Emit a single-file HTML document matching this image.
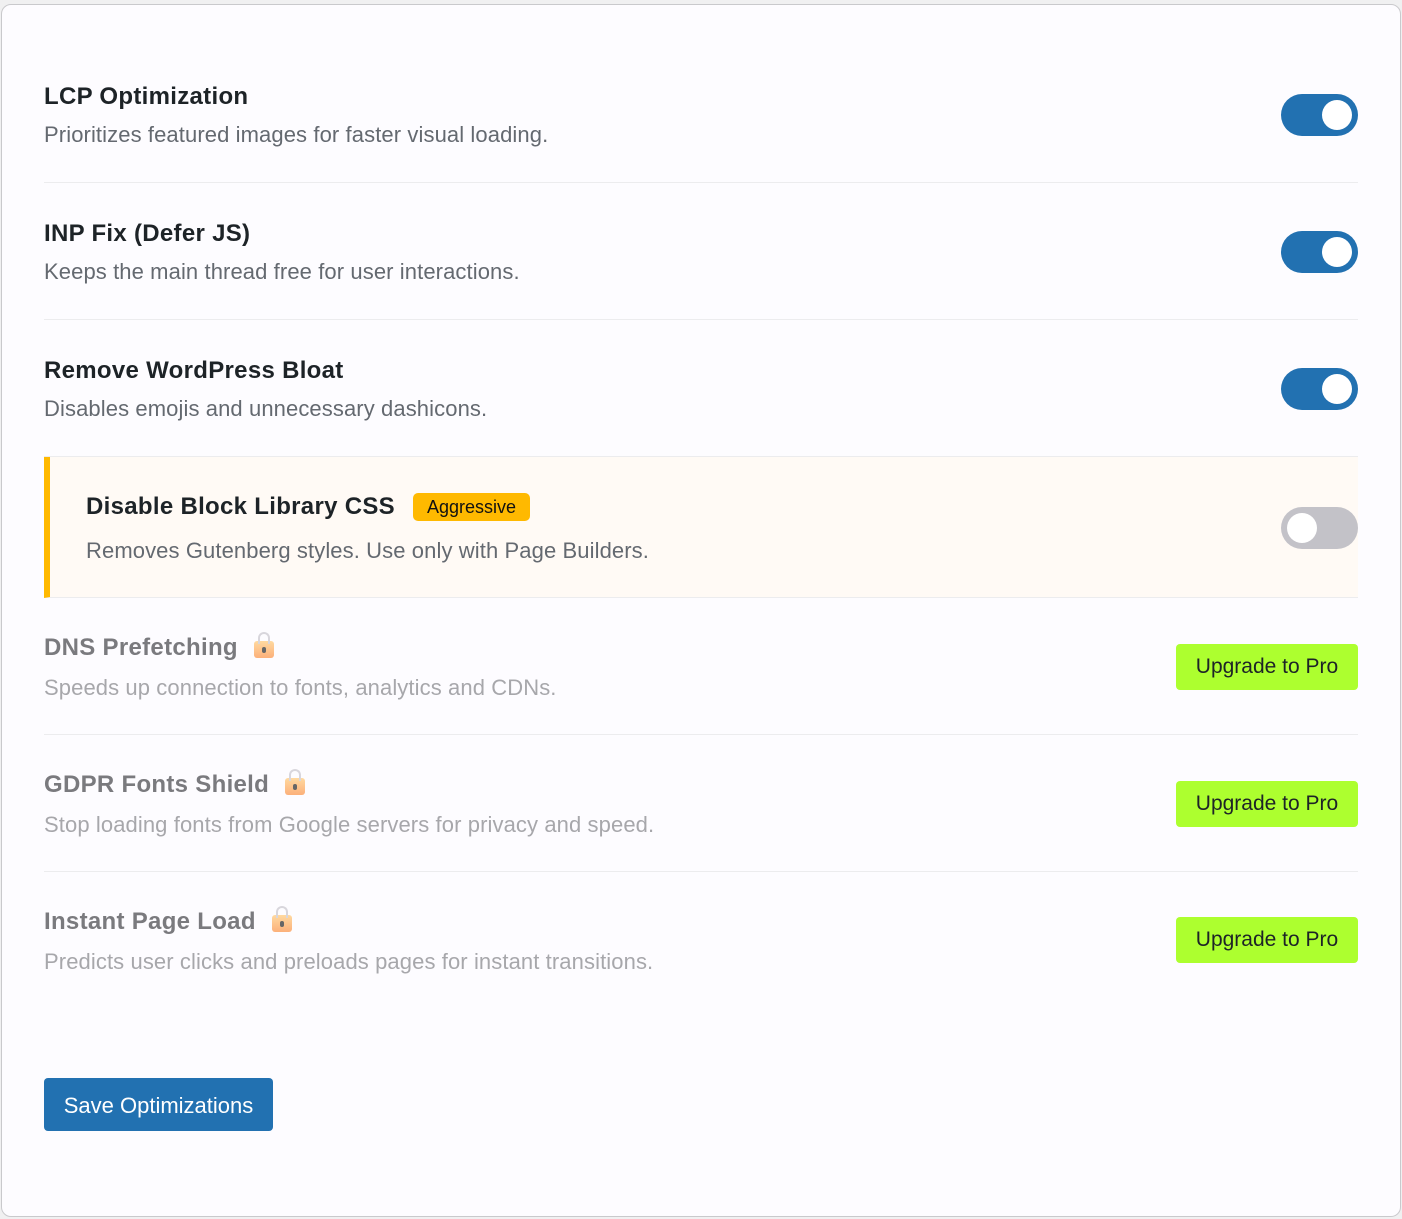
<!DOCTYPE html>
<html><head><style>
*{box-sizing:border-box;margin:0;padding:0}
body{width:1402px;height:1219px;background:#f0f0f1;font-family:"Liberation Sans",sans-serif;position:relative;overflow:hidden}
.card{position:absolute;left:1px;top:4px;width:1400px;height:1213px;background:#fdfcff;border:1px solid #c9c9cc;border-radius:10px}
.row{position:absolute;left:44px;width:1314px;height:137px;border-bottom:1px solid #ececee}
.t{position:absolute;left:0;font-size:24px;font-weight:600;color:#1d2327;letter-spacing:0.3px}
.d{position:absolute;left:0;font-size:22px;color:#646970;letter-spacing:0.1px}
.tg{position:absolute;right:0;width:77px;height:42px;border-radius:21px;background:#2271b1}
.tg::after{content:"";position:absolute;right:6px;top:6px;width:30px;height:30px;border-radius:50%;background:#fff}
.tg.off{background:#c3c2c8}
.tg.off::after{left:6px;right:auto}
.pro .t{color:#7a7a7e}.pro .d{color:#a7a7ab}
.up{position:absolute;right:0;width:182px;height:46px;background:#adff2f;border-radius:4px;font-size:21px;color:#1d2327;text-align:center;line-height:46px}
.lock{display:inline-block;width:20px;height:17px;background:linear-gradient(#ffd9a0,#fcb07a);border-radius:3px;position:relative;margin-left:16px;vertical-align:-3px}
.lock::before{content:"";position:absolute;left:4px;top:-9px;width:8px;height:10px;border:2px solid #d8d6dc;border-bottom:none;border-radius:6px 6px 0 0}
.lock::after{content:"";position:absolute;left:8px;top:6px;width:4px;height:6px;background:#666;border-radius:2px}
.badge{display:inline-block;background:#ffb900;border-radius:5px;font-size:18px;font-weight:400;padding:4px 14px 3px;margin-left:18px;vertical-align:1px;color:#111;letter-spacing:0}
</style></head><body>
<div class="card"></div>
<div class="row" style="top:46px"><div class="t" style="top:37px">LCP Optimization</div><div class="d" style="top:76px">Prioritizes featured images for faster visual loading.</div><div class="tg" style="top:48px"></div></div>
<div class="row" style="top:183px"><div class="t" style="top:37px">INP Fix (Defer JS)</div><div class="d" style="top:76px">Keeps the main thread free for user interactions.</div><div class="tg" style="top:48px"></div></div>
<div class="row" style="top:320px"><div class="t" style="top:37px">Remove WordPress Bloat</div><div class="d" style="top:76px">Disables emojis and unnecessary dashicons.</div><div class="tg" style="top:48px"></div></div>
<div class="row" style="top:457px;height:141px;background:#fffaf5;border-left:6px solid #ffb900"><div class="t" style="left:36px;top:36px">Disable Block Library CSS<span class="badge">Aggressive</span></div><div class="d" style="left:36px;top:81px">Removes Gutenberg styles. Use only with Page Builders.</div><div class="tg off" style="top:50px"></div></div>
<div class="row pro" style="top:598px;height:137px"><div class="t" style="top:36px">DNS Prefetching<span class="lock"></span></div><div class="d" style="top:77px">Speeds up connection to fonts, analytics and CDNs.</div><div class="up" style="top:46px">Upgrade to Pro</div></div>
<div class="row pro" style="top:735px"><div class="t" style="top:36px">GDPR Fonts Shield<span class="lock"></span></div><div class="d" style="top:77px">Stop loading fonts from Google servers for privacy and speed.</div><div class="up" style="top:46px">Upgrade to Pro</div></div>
<div class="row pro" style="top:872px;border:none"><div class="t" style="top:36px">Instant Page Load<span class="lock"></span></div><div class="d" style="top:77px">Predicts user clicks and preloads pages for instant transitions.</div><div class="up" style="top:45px">Upgrade to Pro</div></div>
<div style="position:absolute;left:44px;top:1078px;width:229px;height:53px;background:#2271b1;border-radius:4px;color:#fff;font-size:22px;line-height:55px;text-align:center">Save Optimizations</div>
</body></html>
